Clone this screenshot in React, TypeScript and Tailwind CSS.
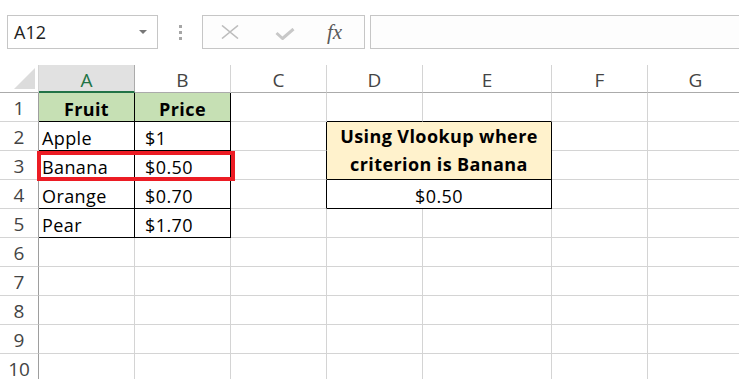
import React from 'react';

const COLS = ['A', 'B', 'C', 'D', 'E', 'F', 'G'];
const ROWS = [1, 2, 3, 4, 5, 6, 7, 8, 9, 10];

const FRUITS = ['Fruit', 'Apple', 'Banana', 'Orange', 'Pear'];
const PRICES = ['Price', '$1', '$0.50', '$0.70', '$1.70'];

// cells covered by the merged D2:E3 and D4:E4 blocks
const HIDDEN = ['E2', 'D3', 'E3', 'E4'];

const rightBorder = (col: string, row: number) => {
    const inTable = (col === 'A' || col === 'B') && row <= 5;
    const leftOfMerge = col === 'C' && row >= 2 && row <= 4;
    const merged = (col === 'D' || col === 'E') && row >= 2 && row <= 4;
    return inTable || leftOfMerge || merged ? 'border-r-black' : 'border-r-[#d4d4d4]';
};

const bottomBorder = (col: string, row: number) => {
    const inTable = (col === 'A' || col === 'B') && row <= 5;
    const aboveMerge = (col === 'D' || col === 'E') && row === 1;
    const merged = (col === 'D' || col === 'E') && row >= 2 && row <= 4;
    return inTable || aboveMerge || merged ? 'border-b-black' : 'border-b-[#d4d4d4]';
};

const XIcon = () => (
    <svg width="18" height="14" viewBox="0 0 18 14" className="shrink-0">
        <path d="M1 0.5 L17 13.5 M17 0.5 L1 13.5" stroke="#bdbdbd" strokeWidth="1.6" fill="none" />
    </svg>
);

const CheckIcon = () => (
    <svg width="20" height="12" viewBox="0 0 20 12" className="shrink-0">
        <path d="M1.5 5 L7.5 10.5 L18.5 1" stroke="#c8c8c8" strokeWidth="3" fill="none" strokeLinejoin="round" />
    </svg>
);

const SheetCell = ({ col, row }: { col: string; row: number }) => {
    const key = `${col}${row}`;
    if (HIDDEN.includes(key)) return null;

    const base = `border-r border-b ${rightBorder(col, row)} ${bottomBorder(col, row)} flex items-end leading-[24px] text-[18px] tracking-[0.4px] text-black overflow-hidden whitespace-nowrap`;

    if (col === 'A' && row <= 5) {
        if (row === 1) return <div className={`${base} bg-[#c6e0b4] justify-center font-bold`}>{FRUITS[0]}</div>;
        return <div className={`${base} pl-[3px]`}>{FRUITS[row - 1]}</div>;
    }
    if (col === 'B' && row <= 5) {
        if (row === 1) return <div className={`${base} bg-[#c6e0b4] justify-center font-bold`}>{PRICES[0]}</div>;
        return <div className={`${base} pl-[10px]`}>{PRICES[row - 1]}</div>;
    }
    if (key === 'D2') {
        return (
            <div className={`${base} col-span-2 row-span-2 bg-[#fff2cc] justify-center text-center font-bold !leading-[28px] pb-[1px]`}>
                Using Vlookup where
                <br />
                criterion is Banana
            </div>
        );
    }
    if (key === 'D4') {
        return <div className={`${base} col-span-2 justify-center`}>$0.50</div>;
    }
    return <div className={base} />;
};

export default function App() {
    return (
        <div className="w-[739px] h-[379px] overflow-hidden bg-white font-['Open_Sans',sans-serif] select-none">
            {/* name box + formula bar */}
            <div className="h-[65px] flex items-start pt-[15px]">
                <div className="ml-[7px] w-[151px] h-[34px] shrink-0 border border-[#c6c6c6] bg-white flex items-center justify-between pl-[6px] pr-[10px]">
                    <span className="text-[18px] text-[#222]">A12</span>
                    <span className="w-0 h-0 border-l-[4px] border-r-[4px] border-t-[4px] border-l-transparent border-r-transparent border-t-[#777]" />
                </div>
                <div className="ml-[21px] h-[34px] flex flex-col justify-center gap-[3px] shrink-0">
                    <span className="w-[3px] h-[3px] bg-[#a6a6a6]" />
                    <span className="w-[3px] h-[3px] bg-[#a6a6a6]" />
                    <span className="w-[3px] h-[3px] bg-[#a6a6a6]" />
                </div>
                <div className="ml-[20px] w-[163px] h-[34px] shrink-0 border border-[#c6c6c6] bg-[#fdfdfd] flex items-center pl-[18px]">
                    <XIcon />
                    <span className="ml-[36px] mt-[3px] flex">
                        <CheckIcon />
                    </span>
                    <span className="ml-[32px] font-['Liberation_Serif',serif] italic text-[21px] text-[#5a5a5a] leading-none">fx</span>
                </div>
                <div className="ml-[5px] w-[400px] h-[34px] shrink-0 border border-[#c6c6c6] bg-[#fdfdfd]" />
            </div>

            {/* sheet grid */}
            <div className="relative grid grid-cols-[39px_96px_96px_96px_96px_129px_96px_96px] grid-rows-[28px_repeat(10,29px)] w-[840px]">
                <div className="border-r border-b border-r-[#d4d4d4] border-b-[#ababab] flex items-end justify-end pr-[3px] pb-[3px]">
                    <svg width="21" height="21" viewBox="0 0 21 21">
                        <path d="M21 0 L21 21 L0 21 Z" fill="#dcdcdc" />
                    </svg>
                </div>
                {COLS.map((c) =>
                    c === 'A' ? (
                        <div key={c} className="bg-[#e1e1e1] border-r border-r-[#ababab] border-b-2 border-b-[#217346] flex items-center justify-center pt-[5px] text-[19px] text-[#217346]">
                            {c}
                        </div>
                    ) : (
                        <div key={c} className="border-r border-b border-r-[#d4d4d4] border-b-[#ababab] flex items-center justify-center pt-[4px] text-[19px] text-[#444]">
                            {c}
                        </div>
                    )
                )}
                {ROWS.map((r) => (
                    <React.Fragment key={r}>
                        <div className="border-r border-b border-r-[#9e9e9e] border-b-[#d4d4d4] flex items-center justify-center pt-[2px] text-[19px] text-[#444]">
                            {r}
                        </div>
                        {COLS.map((c) => (
                            <SheetCell key={c} col={c} row={r} />
                        ))}
                    </React.Fragment>
                ))}

                {/* red highlight round row 3 */}
                <div className="absolute left-[37px] top-[86px] w-[198px] h-[30px] border-[4px] border-[#ec1c24] pointer-events-none" />
            </div>
        </div>
    );
}
